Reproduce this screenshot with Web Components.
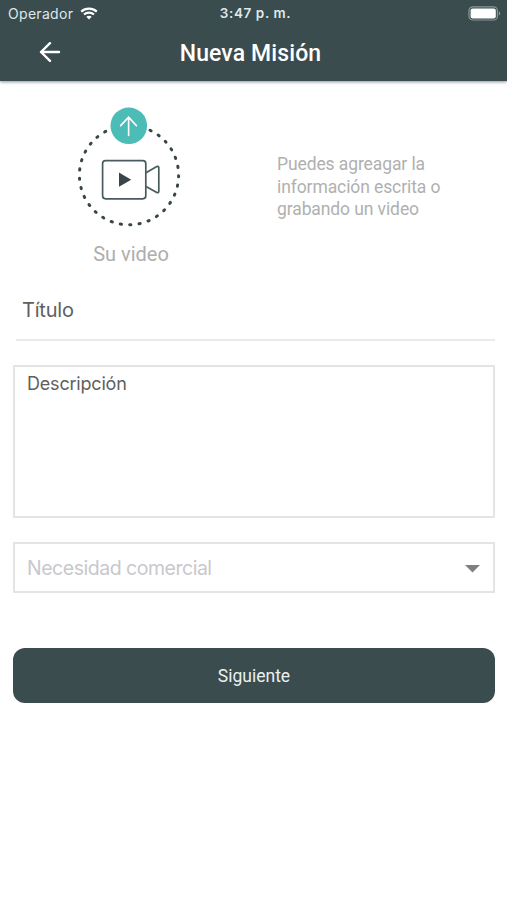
<!DOCTYPE html>
<html lang="es">
<head>
<meta charset="utf-8">
<meta name="viewport" content="width=device-width, initial-scale=1">
<title>Nueva Misión</title>
<style>
  body {
    margin: 0;
    background: #fff;
    font-family: Roboto, sans-serif;
  }
</style>
</head>
<body>
<mision-page></mision-page>

<script>
class StatusBar extends HTMLElement {
  constructor() {
    super();
    this.attachShadow({mode: 'open'});
  }

  connectedCallback() {
    this.shadowRoot.innerHTML = `
      <style>
        :host {
          display: grid;
          grid-template-columns: 1fr auto 1fr;
          align-items: center;
          height: 27px;
          padding: 0 6px 0 8px;
          color: #dfe8e9;
          font: 400 14px/27px Inter, sans-serif;
        }
        .carrier {
          display: flex;
          align-items: center;
          gap: 7px;
          letter-spacing: 0.3px;
        }
        .time {
          padding-left: 2px;
          font-weight: 600;
          font-size: 13.5px;
          letter-spacing: 0.6px;
        }
        .battery {
          justify-self: end;
        }
        svg {
          display: block;
        }
      </style>
      <div class="carrier">
        <span>${this.getAttribute('carrier')}</span>
        <svg width="18" height="13" viewBox="0 0 18 13" fill="none" stroke="#fff" stroke-width="2.1">
          <path d="M1.2 4.6C5.6 .6 12.4 .6 16.8 4.6"/>
          <path d="M4 7.6C6.8 5 11.2 5 14 7.6"/>
          <path d="M9 12.4L6.3 9.8C7.8 8.4 10.2 8.4 11.7 9.8Z" fill="#fff" stroke="none"/>
        </svg>
      </div>
      <div class="time">${this.getAttribute('time')}</div>
      <svg class="battery" width="33" height="15" viewBox="0 0 33 15">
        <rect x="1" y=".8" width="28.4" height="13.2" rx="3.8" fill="none" stroke="#89979a" stroke-width="1.2"/>
        <rect x="2.6" y="2.4" width="25.2" height="10" rx="2.2" fill="#fff"/>
        <path d="M30.8 5.2V9.6Q32.3 8.8 32.3 7.4T30.8 5.2Z" fill="#89979a"/>
      </svg>
    `;
  }
}

class NavBar extends HTMLElement {
  constructor() {
    super();
    this.attachShadow({mode: 'open'});
  }

  connectedCallback() {
    this.shadowRoot.innerHTML = `
      <style>
        :host {
          display: grid;
          grid-template-columns: 80px 1fr 86px;
          align-items: center;
          height: 54px;
          color: #fff;
        }
        svg {
          display: block;
          margin: -4px 0 0 39px;
        }
        h1 {
          margin: 0;
          font-size: 23px;
          line-height: 54px;
          font-weight: 500;
          letter-spacing: 0.12px;
          text-align: center;
        }
      </style>
      <svg width="22" height="20" viewBox="0 0 22 20" fill="none" stroke="#fff" stroke-width="2.4" stroke-linecap="round" stroke-linejoin="round">
        <path d="M20 10H2M11 1.2L2 10L11 18.8"/>
      </svg>
      <h1><slot></slot></h1>
    `;
  }
}

class VideoUpload extends HTMLElement {
  constructor() {
    super();
    this.attachShadow({mode: 'open'});
  }

  connectedCallback() {
    this.shadowRoot.innerHTML = `
      <style>
        :host {
          display: flex;
          flex-direction: column;
          align-items: center;
          color: #adadad;
        }
        svg {
          display: block;
        }
        .label {
          margin-top: 13px;
          margin-left: 4px;
          font-size: 20px;
          line-height: 26px;
        }
      </style>
      <svg width="104" height="121" viewBox="77 107 104 121" fill="none">
        <circle cx="129" cy="175.2" r="49.6" pathLength="330" stroke="#394649" stroke-width="3" stroke-linecap="round" stroke-dasharray="1.3 8.7" stroke-dashoffset="-0.5"/>
        <circle cx="128.8" cy="125.8" r="19.6" fill="#fff"/>
        <circle cx="128.8" cy="125.8" r="18.3" fill="#4cbcb7"/>
        <path d="M128.6 135.5V117.2M120.6 125.6L128.6 117.2L136.4 125.6" stroke="#fff" stroke-width="1.6" stroke-linecap="round"/>
        <g stroke="#4a5b5d" stroke-width="1.7" stroke-linejoin="round">
          <rect x="102.6" y="160.7" width="43.2" height="38.1" rx="3"/>
          <path d="M146 172.8L156.8 166.6Q158.8 165.8 158.8 167.6V191.2Q158.8 193.2 156.8 192.4L146 186.4"/>
        </g>
        <path d="M119 172.6L131.2 179.7L119 186.8Z" fill="#394649"/>
      </svg>
      <div class="label"><slot></slot></div>
    `;
  }
}

class FormField extends HTMLElement {
  constructor() {
    super();
    this.attachShadow({mode: 'open'});
  }

  connectedCallback() {
    this.shadowRoot.innerHTML = `
      <style>
        :host {
          display: flex;
          box-sizing: border-box;
          color: #606060;
          font-family: Inter, sans-serif;
        }
        :host([type="line"]) {
          height: 52px;
          margin-left: 3px;
          padding: 5px 6px 0;
          border-bottom: 2px solid #ebebeb;
          font-size: 20px;
          line-height: 32px;
          letter-spacing: -0.2px;
        }
        :host([type="area"]) {
          height: 153px;
          margin-top: 24px;
          padding: 5px 12px;
          border: 2px solid #e4e4e4;
          font-size: 18px;
          line-height: 23px;
          letter-spacing: -0.2px;
        }
        :host([type="select"]) {
          height: 51px;
          margin-top: 24px;
          padding: 0 13px 0 12px;
          align-items: center;
          justify-content: space-between;
          border: 2px solid #e4e4e4;
          color: #c8c8cc;
          font-size: 19.5px;
          letter-spacing: -0.48px;
        }
        svg {
          display: none;
        }
        :host([type="select"]) svg {
          display: block;
          margin-top: 3px;
        }
      </style>
      <span><slot></slot></span>
      <svg width="15" height="8" viewBox="0 0 15 8"><path d="M0 0H15L7.5 7.6Z" fill="#7f7f7f"/></svg>
    `;
  }
}

class MainButton extends HTMLElement {
  constructor() {
    super();
    this.attachShadow({mode: 'open'});
  }

  connectedCallback() {
    this.shadowRoot.innerHTML = `
      <style>
        :host {
          display: block;
        }
        button {
          display: block;
          width: 100%;
          height: 55px;
          padding: 1px 0 0;
          border: 0;
          border-radius: 12px;
          background: #3a4c4e;
          color: #e9f1f1;
          font: 400 17.5px/54px Roboto, sans-serif;
          letter-spacing: 0;
        }
      </style>
      <button type="button"><slot></slot></button>
    `;
  }
}

class MisionPage extends HTMLElement {
  constructor() {
    super();
    this.attachShadow({mode: 'open'});
  }

  connectedCallback() {
    this.shadowRoot.innerHTML = `
      <style>
        :host {
          display: block;
          min-height: 900px;
        }
        header {
          height: 81px;
          background: #3a4c4e;
          box-shadow: 0 1px 3px rgba(40, 55, 60, 0.55);
        }
        .intro {
          display: grid;
          grid-template-columns: 258px 1fr;
          padding-top: 26px;
        }
        p {
          margin: 46px 0 0 19px;
          color: #b0b0b0;
          font-size: 17.5px;
          line-height: 22.5px;
          letter-spacing: -0.1px;
        }
        form {
          padding: 22px 12px 0 13px;
        }
        main-button {
          margin-top: 55px;
        }
      </style>
      <header>
        <status-bar carrier="Operador" time="3:47 p. m."></status-bar>
        <nav-bar>Nueva Misión</nav-bar>
      </header>
      <section class="intro">
        <video-upload>Su video</video-upload>
        <p>Puedes agreagar la<br>información escrita o<br>grabando un video</p>
      </section>
      <form>
        <form-field type="line">Título</form-field>
        <form-field type="area">Descripción</form-field>
        <form-field type="select">Necesidad comercial</form-field>
        <main-button>Siguiente</main-button>
      </form>
    `;
  }
}

customElements.define('status-bar', StatusBar);
customElements.define('nav-bar', NavBar);
customElements.define('video-upload', VideoUpload);
customElements.define('form-field', FormField);
customElements.define('main-button', MainButton);
customElements.define('mision-page', MisionPage);
</script>
</body>
</html>
